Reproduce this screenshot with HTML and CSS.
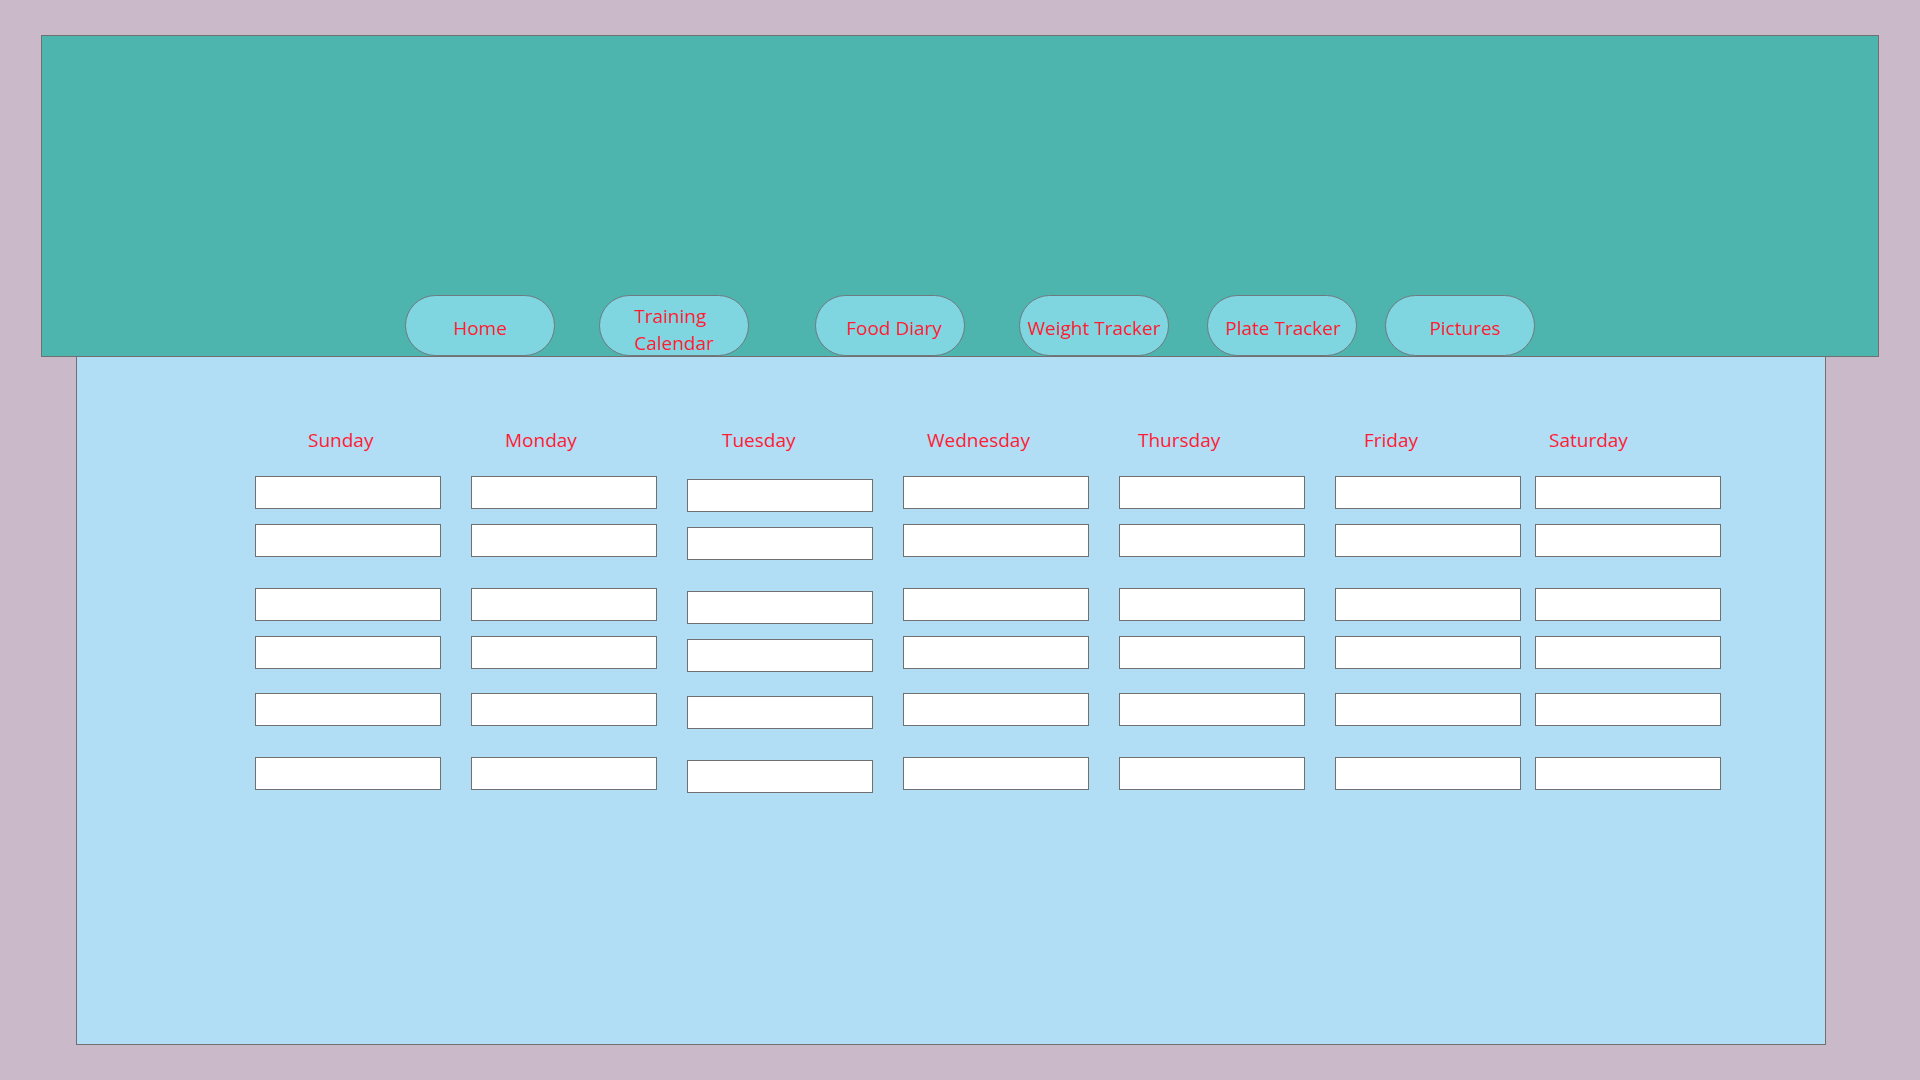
FILE: index.html
```html
<!DOCTYPE html>
<html lang="en">
<head>
<meta charset="utf-8">
<title>Training Calendar</title>
<link rel="stylesheet" href="styles.css">
</head>
<body>
<header class="header">
  <nav class="nav">
    <a class="nav-btn btn-home">Home</a>
    <a class="nav-btn btn-training"><span class="two-line">Training<br>Calendar</span></a>
    <a class="nav-btn btn-food">Food Diary</a>
    <a class="nav-btn btn-weight">Weight Tracker</a>
    <a class="nav-btn btn-plate">Plate Tracker</a>
    <a class="nav-btn btn-pictures">Pictures</a>
  </nav>
</header>
<main class="main">
  <section class="week">
    <div class="day">
      <div class="day-label lbl-sun">Sunday</div>
      <div class="slots">
        <div class="slot r1"></div><div class="slot r2"></div><div class="slot r3"></div>
        <div class="slot r4"></div><div class="slot r5"></div><div class="slot r6"></div>
      </div>
    </div>
    <div class="day">
      <div class="day-label lbl-mon">Monday</div>
      <div class="slots">
        <div class="slot r1"></div><div class="slot r2"></div><div class="slot r3"></div>
        <div class="slot r4"></div><div class="slot r5"></div><div class="slot r6"></div>
      </div>
    </div>
    <div class="day">
      <div class="day-label lbl-tue">Tuesday</div>
      <div class="slots slots-shift">
        <div class="slot r1"></div><div class="slot r2"></div><div class="slot r3"></div>
        <div class="slot r4"></div><div class="slot r5"></div><div class="slot r6"></div>
      </div>
    </div>
    <div class="day">
      <div class="day-label lbl-wed">Wednesday</div>
      <div class="slots">
        <div class="slot r1"></div><div class="slot r2"></div><div class="slot r3"></div>
        <div class="slot r4"></div><div class="slot r5"></div><div class="slot r6"></div>
      </div>
    </div>
    <div class="day">
      <div class="day-label lbl-thu">Thursday</div>
      <div class="slots">
        <div class="slot r1"></div><div class="slot r2"></div><div class="slot r3"></div>
        <div class="slot r4"></div><div class="slot r5"></div><div class="slot r6"></div>
      </div>
    </div>
    <div class="day">
      <div class="day-label lbl-fri">Friday</div>
      <div class="slots">
        <div class="slot r1"></div><div class="slot r2"></div><div class="slot r3"></div>
        <div class="slot r4"></div><div class="slot r5"></div><div class="slot r6"></div>
      </div>
    </div>
    <div class="day day-sat">
      <div class="day-label lbl-sat">Saturday</div>
      <div class="slots">
        <div class="slot r1"></div><div class="slot r2"></div><div class="slot r3"></div>
        <div class="slot r4"></div><div class="slot r5"></div><div class="slot r6"></div>
      </div>
    </div>
  </section>
</main>
</body>
</html>
```

FILE: styles.css
```css
* {
  box-sizing: border-box;
}

html, body {
  margin: 0;
  padding: 0;
}

body {
  background: #cab9c9;
  padding: 35px 0 0 41px;
  height: 1080px;
  overflow: hidden;
  font-family: "Open Sans", "Noto Sans", sans-serif;
  font-size: 19px;
  color: #ff1c34;
}

.header {
  width: 1838px;
  height: 322px;
  background: #4db5ae;
  border: 1px solid #707070;
  display: flex;
  align-items: flex-end;
}

.nav {
  display: flex;
  align-items: flex-end;
  padding-left: 363px;
}

.nav-btn {
  width: 150px;
  height: 61px;
  border: 1px solid #6f7a80;
  border-radius: 31px;
  background: #7fd6e1;
  display: flex;
  align-items: center;
  justify-content: center;
  padding-top: 4px;
  line-height: 26px;
  white-space: nowrap;
  color: #ff1c34;
}

.btn-training {
  margin-left: 44px;
  padding-top: 8px;
}

.btn-food {
  margin-left: 66px;
  padding-left: 8px;
}

.btn-weight {
  margin-left: 54px;
}

.btn-plate {
  margin-left: 38px;
  padding-left: 2px;
}

.btn-pictures {
  margin-left: 28px;
  padding-left: 10px;
}

.two-line {
  display: inline-block;
  text-align: left;
  line-height: 27px;
}

.main {
  width: 1750px;
  height: 689px;
  margin: -1px 0 0 35px;
  background: #b1ddf5;
  border: 1px solid #707070;
}

.week {
  display: flex;
  padding: 70px 0 0 178px;
}

.day {
  width: 186px;
  display: flex;
  flex-direction: column;
}

.day + .day {
  margin-left: 30px;
}

.day.day-sat {
  margin-left: 14px;
}

.day-label {
  height: 26px;
  line-height: 26px;
  white-space: nowrap;
}

.lbl-sun { padding-left: 53px; }
.lbl-mon { padding-left: 34px; }
.lbl-tue { padding-left: 35px; }
.lbl-wed { padding-left: 24px; }
.lbl-thu { padding-left: 19px; }
.lbl-fri { padding-left: 29px; }
.lbl-sat { padding-left: 14px; }

.slots {
  display: flex;
  flex-direction: column;
  padding-top: 23px;
}

.slots.slots-shift {
  padding-top: 26px;
}

.slot {
  width: 186px;
  height: 33px;
  background: #ffffff;
  border: 1px solid #707070;
}

.r2 { margin-top: 15px; }
.r3 { margin-top: 31px; }
.r4 { margin-top: 15px; }
.r5 { margin-top: 24px; }
.r6 { margin-top: 31px; }
```
